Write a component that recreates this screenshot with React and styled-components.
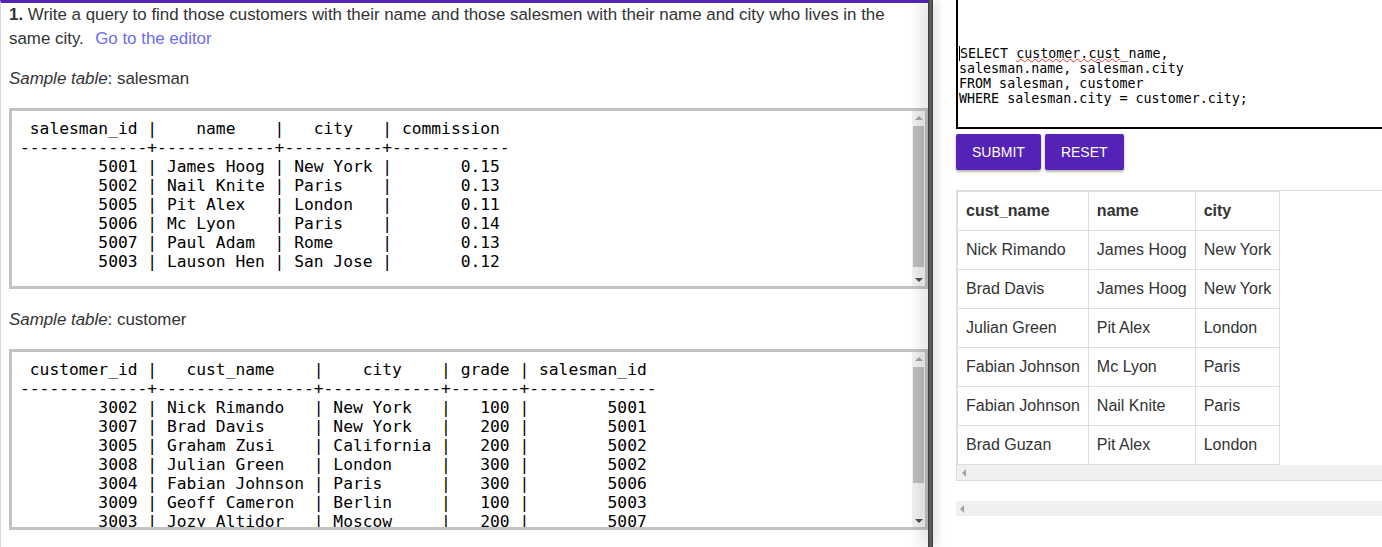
import React from "react";
import styled, { createGlobalStyle } from "styled-components";

const GlobalStyle = createGlobalStyle`
  html, body {
    margin: 0;
    padding: 0;
    height: 547px;
    overflow: hidden;
    background: #fff;
    font-family: "Liberation Sans", Arial, sans-serif;
  }
  *, *::before, *::after {
    box-sizing: border-box;
  }
`;

const Split = styled.div`
  display: flex;
  height: 547px;
  overflow: hidden;
`;

const LeftPane = styled.div`
  width: 928px;
  flex: none;
  height: 100%;
  overflow: hidden;
  border-top: 3px solid #5524b6;
  border-left: 1px solid #d9d9d9;
  padding: 0 0 0 8px;
  color: #333;
  font-size: 16.9px;
  line-height: 24px;
`;

const Gutter = styled.div`
  width: 5px;
  flex: none;
  background: #5a5a5a;
  border-left: 1px solid #3d3d3d;
  border-right: 1px solid #3d3d3d;
  position: relative;
  z-index: 1;
  box-shadow: -5px 0 14px rgba(0, 0, 0, 0.26), 4px 0 10px rgba(0, 0, 0, 0.12);
`;

const RightPane = styled.div`
  flex: 1;
  height: 100%;
  overflow: hidden;
  padding-left: 23px;
  background: #fff;
`;

const RightInner = styled.div`
  width: 640px;
`;

const Question = styled.p`
  margin: 0 0 16px;
  padding-right: 10px;
  b {
    font-weight: bold;
  }
`;

const EditorLink = styled.a`
  color: #6b6bf6;
  text-decoration: none;
  margin-left: 2px;
`;

const SampleLabel = styled.p`
  margin: 0 0 17px;
  i {
    font-style: italic;
  }
`;

const SampleBox = styled.div`
  display: flex;
  margin: 0 0 19px;
  height: 181px;
  border: 3px solid #c3c3c3;
  background: #fff;
`;

const SampleText = styled.pre`
  flex: 1;
  margin: 0;
  padding: 8px 8px 0;
  overflow: hidden;
  font-family: "DejaVu Sans Mono", monospace;
  font-size: 16.27px;
  line-height: 19px;
  color: #000;
  white-space: pre;
`;

/* scrollbar look-alikes */
const VScroll = styled.div`
  width: 13px;
  flex: none;
  display: flex;
  flex-direction: column;
  background: #f1f1f1;
`;

const ArrowCell = styled.div`
  height: 13px;
  flex: none;
  display: flex;
  align-items: center;
  justify-content: center;
`;

const UpArrow = styled.span`
  width: 0;
  height: 0;
  border-left: 4px solid transparent;
  border-right: 4px solid transparent;
  border-bottom: 4px solid #a3a3a3;
`;

const DownArrow = styled.span`
  width: 0;
  height: 0;
  border-left: 4px solid transparent;
  border-right: 4px solid transparent;
  border-top: 4px solid #505050;
`;

const Track = styled.div`
  flex: 1;
  padding: 2px 1px;
`;

const Thumb = styled.div`
  height: ${(p) => p.$ratio * 100}%;
  background: #bdbdbd;
`;

const HScroll = styled.div`
  height: 15px;
  display: flex;
  align-items: center;
  padding-left: 5px;
  background: #f0f0f0;
`;

const LeftArrow = styled.span`
  width: 0;
  height: 0;
  border-top: 4px solid transparent;
  border-bottom: 4px solid transparent;
  border-right: 4px solid #a3a3a3;
`;

const Editor = styled.div`
  height: 129px;
  border: 2px solid #000;
  border-top: none;
  padding: 46px 0 0 1px;
  font-family: "DejaVu Sans Mono", monospace;
  font-size: 13.33px;
  line-height: 15px;
  color: #000;
  white-space: pre;
`;

const Caret = styled.span`
  display: inline-block;
  width: 1px;
  height: 15px;
  background: #000;
  vertical-align: top;
`;

const Misspelled = styled.span`
  text-decoration: underline wavy #e53935;
  text-decoration-thickness: 1px;
  text-underline-offset: 0px;
  text-decoration-skip-ink: none;
`;

const ButtonRow = styled.div`
  display: flex;
  gap: 4px;
  margin-top: 5px;
`;

const ActionButton = styled.button`
  height: 36px;
  padding: 0 16px;
  border: none;
  border-radius: 2px;
  background: #5522b7;
  color: #fff;
  font-family: "Liberation Sans", Arial, sans-serif;
  font-size: 14px;
  text-transform: uppercase;
  box-shadow: 0 2px 2px rgba(0, 0, 0, 0.22), 0 1px 4px rgba(0, 0, 0, 0.12);
  cursor: pointer;
`;

const ResultBox = styled.div`
  margin-top: 20px;
  border: 1px solid #ddd;
`;

const ResultTable = styled.table`
  border-collapse: collapse;
  border: 1px solid #ddd;
  color: #333;
  font-size: 16px;
  line-height: 22px;

  th,
  td {
    border: 1px solid #ddd;
    padding: 8px;
    text-align: left;
    white-space: nowrap;
  }
  th {
    font-weight: bold;
  }
`;

const BottomStrip = styled(HScroll)`
  margin-top: 20px;
  padding-left: 4px;
  background: #efefef;
`;

// psql style text table
const formatTable = (cols, rows) => {
  const widths = cols.map((c, i) =>
    Math.max(c.name.length, ...rows.map((r) => String(r[i]).length))
  );
  const head = cols
    .map((c, i) => {
      const pad = widths[i] - c.name.length;
      const left = Math.floor(pad / 2);
      return " " + " ".repeat(left) + c.name + " ".repeat(pad - left) + " ";
    })
    .join("|");
  const sep = widths.map((w) => "-".repeat(w + 2)).join("+");
  const body = rows.map((r) =>
    r
      .map((v, i) => {
        const s = String(v);
        const p = " ".repeat(widths[i] - s.length);
        return " " + (cols[i].num ? p + s : s + p) + " ";
      })
      .join("|")
  );
  return [head, sep, ...body];
};

const salesmanLines = formatTable(
  [
    { name: "salesman_id", num: true },
    { name: "name" },
    { name: "city" },
    { name: "commission", num: true },
  ],
  [
    [5001, "James Hoog", "New York", "0.15"],
    [5002, "Nail Knite", "Paris", "0.13"],
    [5005, "Pit Alex", "London", "0.11"],
    [5006, "Mc Lyon", "Paris", "0.14"],
    [5007, "Paul Adam", "Rome", "0.13"],
    [5003, "Lauson Hen", "San Jose", "0.12"],
  ]
);

const customerLines = formatTable(
  [
    { name: "customer_id", num: true },
    { name: "cust_name" },
    { name: "city" },
    { name: "grade", num: true },
    { name: "salesman_id", num: true },
  ],
  [
    [3002, "Nick Rimando", "New York", 100, 5001],
    [3007, "Brad Davis", "New York", 200, 5001],
    [3005, "Graham Zusi", "California", 200, 5002],
    [3008, "Julian Green", "London", 300, 5002],
    [3004, "Fabian Johnson", "Paris", 300, 5006],
    [3009, "Geoff Cameron", "Berlin", 100, 5003],
    [3003, "Jozy Altidor", "Moscow", 200, 5007],
    [3001, "Brad Guzan", "London", 100, 5005],
  ]
);

const results = [
  ["Nick Rimando", "James Hoog", "New York"],
  ["Brad Davis", "James Hoog", "New York"],
  ["Julian Green", "Pit Alex", "London"],
  ["Fabian Johnson", "Mc Lyon", "Paris"],
  ["Fabian Johnson", "Nail Knite", "Paris"],
  ["Brad Guzan", "Pit Alex", "London"],
];

// visible 175px of box, content = padding + lines * 19
const thumbRatio = (lines) => Math.min(1, 175 / (8 + 20 + lines.length * 19));

function SampleTable({ lines }) {
  return (
    <SampleBox>
      <SampleText>{lines.join("\n")}</SampleText>
      <VScroll>
        <ArrowCell>
          <UpArrow />
        </ArrowCell>
        <Track>
          <Thumb $ratio={thumbRatio(lines)} />
        </Track>
        <ArrowCell>
          <DownArrow />
        </ArrowCell>
      </VScroll>
    </SampleBox>
  );
}

function App() {
  return (
    <>
      <GlobalStyle />
      <Split>
        <LeftPane>
          <Question>
            <b>1.</b> Write a query to find those customers with their name and
            those salesmen with their name and city who lives in the same city.
            {" "}&nbsp;
            <EditorLink href="#">Go to the editor</EditorLink>
          </Question>

          <SampleLabel>
            <i>Sample table</i>: salesman
          </SampleLabel>
          <SampleTable lines={salesmanLines} />

          <SampleLabel>
            <i>Sample table</i>: customer
          </SampleLabel>
          <SampleTable lines={customerLines} />
        </LeftPane>

        <Gutter />

        <RightPane>
          <RightInner>
            <Editor>
              <Caret />
              {"SELECT "}
              <Misspelled>customer.cust</Misspelled>
              {"_name,\nsalesman.name, salesman.city\nFROM salesman, customer\nWHERE salesman.city = customer.city;"}
            </Editor>

            <ButtonRow>
              <ActionButton>Submit</ActionButton>
              <ActionButton>Reset</ActionButton>
            </ButtonRow>

            <ResultBox>
              <ResultTable>
                <thead>
                  <tr>
                    <th>cust_name</th>
                    <th>name</th>
                    <th>city</th>
                  </tr>
                </thead>
                <tbody>
                  {results.map((row, i) => (
                    <tr key={i}>
                      {row.map((cell, j) => (
                        <td key={j}>{cell}</td>
                      ))}
                    </tr>
                  ))}
                </tbody>
              </ResultTable>
              <HScroll>
                <LeftArrow />
              </HScroll>
            </ResultBox>

            <BottomStrip>
              <LeftArrow />
            </BottomStrip>
          </RightInner>
        </RightPane>
      </Split>
    </>
  );
}

export default App;
